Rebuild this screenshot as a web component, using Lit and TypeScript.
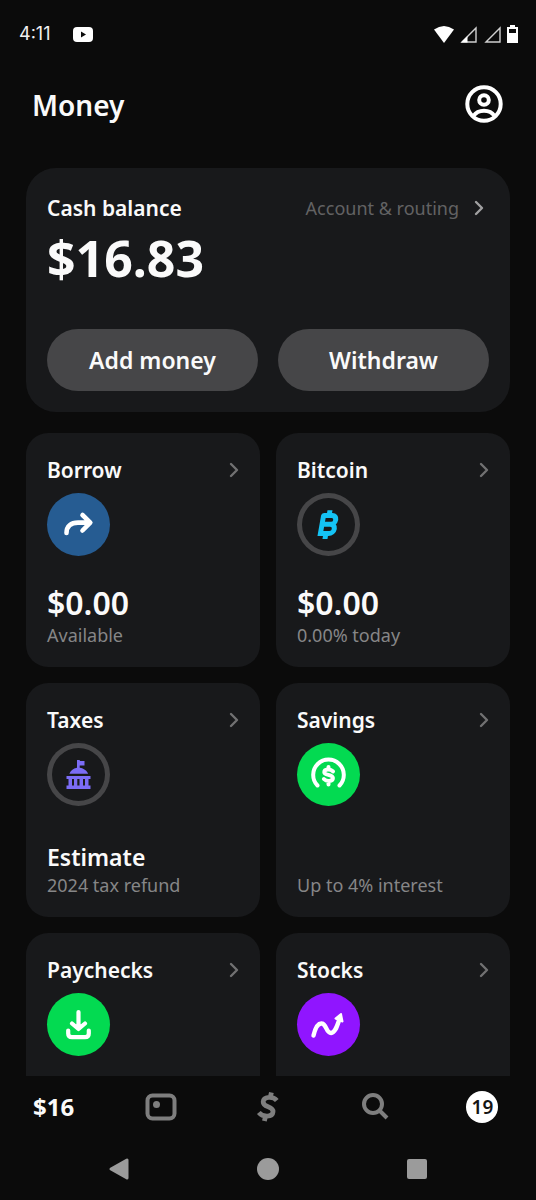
import { LitElement, html, css, svg, nothing } from "lit";
import { customElement } from "lit/decorators.js";
import { classMap } from "lit/directives/class-map.js";

interface Tile {
  title: string;
  tone: string;
  icon: unknown;
  amount?: string;
  headline?: string;
  note?: string;
}

const icons = {
  borrow: svg`<path d="M19.500 40C19.500 33 24 29.600 31 29.600H43M35.500 22L43.300 29.600L35.500 37.500" fill="none" stroke="#fff" stroke-width="4.600" stroke-linecap="round" stroke-linejoin="round"/>`,
  bitcoin: svg`<g transform="translate(30.500 31.500) skewX(-10)" fill="none" stroke="#14c3f5" stroke-width="5" stroke-linejoin="round">
      <path d="M-5.500 9V-9H3A4.400 4.400 0 0 1 3 -.2H-5M3 -.2A4.600 4.600 0 0 1 3 9H-8"/>
      <path d="M0 -14.200V-9M0 9V14.400"/></g>`,
  taxes: svg`<g fill="#7b6cf6"><path d="M30 17h2.400l.8 1h4.300v4.600h-4.800v2.200c4.300.7 7.500 3 8.400 6H22.400c.9-3 3.700-5.300 7.600-6z"/>
      <path fill-rule="evenodd" d="M19.500 33h24v3h-2v6.500h2V46h-24v-3.500h2V36h-2zM25 36v6.500h2V36zM30.300 36v6.500h2.200V36zM36 36v6.500h2V36z"/></g>`,
  savings: svg`<g fill="none" stroke="#fff" stroke-width="4" stroke-linecap="round" stroke-linejoin="round">
      <path d="M20.500 42.500A15.300 15.300 0 1 1 42.500 42.500"/>
      <path d="M36 28.400C33.500 25.600 27.300 25.800 27.300 29.200C27.300 32.800 35.900 31 35.900 35.100C35.900 38.700 29.600 38.900 26.900 36M31.500 24V26M31.500 38.500V41.500"/></g>`,
  paychecks: svg`<path d="M31.500 19V35M25 30.500L31.500 36L38 30.500M21.200 37.500V40.500Q21.200 44.200 25 44.200H38Q41.800 44.200 41.800 40.500V37.500" fill="none" stroke="#fff" stroke-width="4.200" stroke-linecap="round" stroke-linejoin="round"/>`,
  stocks: svg`<path d="M16.500 42.500C18.500 34 21.500 30 25 30.500C29.500 31 29 40 34 40C38.500 39.500 40 33 42.500 26" fill="none" stroke="#fff" stroke-width="4.400" stroke-linecap="round"/><path d="M44 21L45.500 28.500L38.500 25.500Z" fill="#fff" stroke="#fff" stroke-width="2" stroke-linejoin="round"/>`,
};

const tiles: Tile[] = [
  { title: "Borrow", tone: "blue", icon: icons.borrow, amount: "$0.00", note: "Available" },
  { title: "Bitcoin", tone: "ring", icon: icons.bitcoin, amount: "$0.00", note: "0.00% today" },
  { title: "Taxes", tone: "ring", icon: icons.taxes, headline: "Estimate", note: "2024 tax refund" },
  { title: "Savings", tone: "green", icon: icons.savings, note: "Up to 4% interest" },
  { title: "Paychecks", tone: "green", icon: icons.paychecks },
  { title: "Stocks", tone: "violet", icon: icons.stocks },
];

const chevron = html`<svg class="chevron" width="10" height="16" viewBox="0 0 10 16" aria-hidden="true">
  <path d="M2 2L8 8L2 14" fill="none" stroke="currentColor" stroke-width="2.400" stroke-linecap="round" stroke-linejoin="round"/></svg>`;

@customElement("status-bar")
class StatusBar extends LitElement {
  static styles = css`
    :host { display: flex; align-items: center; height: 68px; padding: 0 18px 0 19px; box-sizing: border-box; color: #f0f0f0; }
    .time { font: 400 18px/24px Inter, sans-serif; width: 54px; }
    .signals { display: flex; align-items: center; gap: 6px; margin-left: auto; }
    svg { display: block; }
  `;
  render() {
    return html`<span class="time">4:11</span>
      <svg width="20" height="15" viewBox="0 0 20 15" aria-label="Video"><rect width="20" height="15" rx="4" fill="#fff"/><path d="M8 4.500L13 7.500L8 10.500Z" fill="#0b0b0b"/></svg>
      <div class="signals">
        <svg width="20" height="17" viewBox="0 0 20 17" aria-label="Wi-Fi"><path d="M0 3.500Q10 -3.500 20 3.500L10 17Z" fill="#fff"/></svg>
        <svg width="17" height="17" viewBox="0 0 17 17" aria-label="Signal 1"><path d="M2 16L16 2V16Z" fill="none" stroke="#d0d0d0" stroke-width="1.400"/><path d="M1 16.500L7.500 10V16.500Z" fill="#fff"/></svg>
        <svg width="18" height="17" viewBox="0 0 18 17" aria-label="Signal 2"><path d="M3 16L17 2V16Z" fill="none" stroke="#d0d0d0" stroke-width="1.400"/></svg>
        <svg width="11" height="18" viewBox="0 0 11 18" aria-label="Battery"><path fill-rule="evenodd" d="M3 0h5v2h3v16H0V2h3zM2 4v4h7V4z" fill="#fff"/></svg>
      </div>`;
  }
}

@customElement("money-tile")
class MoneyTile extends LitElement {
  static properties = { tile: { attribute: false } };
  declare tile: Tile;
  static styles = css`
    :host { display: block; }
    .tile { display: flex; flex-direction: column; box-sizing: border-box; min-height: 234px; padding: 21px 21px 20px; border-radius: 22px; background: #18191b; color: #fafafa; text-decoration: none; }
    .top { display: flex; align-items: center; justify-content: space-between; color: #717172; }
    .title { margin: 0; font-size: 21px; line-height: 32px; font-weight: 600; color: #fafafa; }
    .badge { display: block; width: 63px; height: 63px; margin: 7px 0 auto; box-sizing: border-box; border-radius: 50%; }
    .badge svg { display: block; }
    .blue { background: #265c92; }
    .green { background: #03da51; }
    .violet { background: #9015ff; }
    .ring { box-shadow: inset 0 0 0 5px #464648; }
    .amount { font-size: 32px; line-height: 40px; font-weight: 600; }
    .headline { font-size: 23px; line-height: 32px; font-weight: 600; }
    .note { font-size: 18px; line-height: 24px; color: #868687; }
  `;
  render() {
    const t = this.tile;
    return html`<a class="tile" href="#${t.title.toLowerCase()}">
      <div class="top"><h2 class="title">${t.title}</h2>${chevron}</div>
      <span class=${classMap({ badge: true, [t.tone]: true })}><svg width="63" height="63" viewBox="0 0 63 63" aria-hidden="true">${t.icon}</svg></span>
      ${t.amount ? html`<span class="amount">${t.amount}</span>` : nothing}
      ${t.headline ? html`<span class="headline">${t.headline}</span>` : nothing}
      ${t.note ? html`<span class="note">${t.note}</span>` : nothing}
    </a>`;
  }
}

@customElement("app-root")
class AppRoot extends LitElement {
  static styles = css`
    :host { display: flex; flex-direction: column; height: 100vh; background: #0b0b0b; color: #fafafa; font-family: "Noto Sans", sans-serif; }
    .header { display: flex; align-items: center; justify-content: space-between; height: 74px; padding: 0 32px; flex: none; }
    .heading { margin: 0; font-size: 28px; line-height: 40px; font-weight: 600; }
    button { border: 0; padding: 0; margin: 0; background: none; color: inherit; font: inherit; cursor: pointer; }
    svg { display: block; }
    .content { flex: 1; min-height: 0; overflow-y: auto; scrollbar-width: none; padding: 26px 26px 0; }
    .cash { padding: 24px 21px 21px; border-radius: 30px; background: #18191b; }
    .cash-top { display: flex; align-items: center; justify-content: space-between; }
    .cash-title { margin: 0; font-size: 21px; line-height: 32px; font-weight: 600; }
    .routing { display: flex; align-items: center; gap: 15px; margin-right: 5px; font-size: 18px; line-height: 32px; color: #626263; text-decoration: none; }
    .routing .chevron { color: #a0a0a1; }
    .balance { margin: 2px 0 39px; font-size: 50px; line-height: 64px; font-weight: 700; }
    .actions { display: grid; grid-template-columns: 1fr 1fr; gap: 20px; }
    .action { height: 62px; border-radius: 31px; background: #464648; font-size: 23px; line-height: 32px; font-weight: 600; }
    .tiles { display: grid; grid-template-columns: 1fr 1fr; gap: 16px; margin-top: 21px; }
    .tabs { display: grid; grid-template-columns: repeat(5, 1fr); height: 61px; flex: none; color: #7e7e7e; }
    .tab { display: flex; align-items: center; justify-content: center; }
    .tab-balance { font-size: 24px; line-height: 32px; font-weight: 700; color: #fafafa; }
    .count { width: 32px; height: 32px; border-radius: 50%; background: #fff; color: #151515; font-size: 19px; line-height: 32px; font-weight: 600; }
    .system { display: grid; grid-template-columns: repeat(3, 1fr); height: 63px; padding: 0 44px; flex: none; color: #9b9b9b; }
  `;

  render() {
    return html`
      <status-bar></status-bar>
      <header class="header">
        <h1 class="heading">Money</h1>
        <button aria-label="Profile"><svg width="40" height="40" viewBox="0 -1 40 40" fill="none" stroke="#fff" stroke-width="4"><circle cx="20" cy="18" r="16.700"/><circle cx="20" cy="14" r="4.800"/><path d="M9.500 30C14 23 26 23 30.500 30"/></svg></button>
      </header>
      <main class="content">
        <section class="cash">
          <div class="cash-top">
            <h2 class="cash-title">Cash balance</h2>
            <a class="routing" href="#routing">Account &amp; routing ${chevron}</a>
          </div>
          <p class="balance">$16.83</p>
          <div class="actions">
            <button class="action">Add money</button>
            <button class="action">Withdraw</button>
          </div>
        </section>
        <section class="tiles">${tiles.map((t) => html`<money-tile .tile=${t}></money-tile>`)}</section>
      </main>
      <nav class="tabs" aria-label="Main">
        <button class="tab tab-balance">$16</button>
        <button class="tab" aria-label="Card"><svg width="32" height="28" viewBox="0 0 32 28"><rect x="2.500" y="2.500" width="27" height="23" rx="5" fill="none" stroke="currentColor" stroke-width="4"/><circle cx="11.500" cy="11.500" r="3.500" fill="currentColor"/></svg></button>
        <button class="tab" aria-label="Pay"><svg width="24" height="32" viewBox="0 0 24 32" fill="none" stroke="currentColor" stroke-width="4.800"><path d="M20.800 9.500C17 5 7.500 5.500 7.200 10.800C7 17 17.500 14.500 17 20.800C16.500 26.500 7 26.500 2.800 21.500M14.200 6.500L15.400 1.500M8.400 30L9.600 25"/></svg></button>
        <button class="tab" aria-label="Search"><svg width="28" height="28" viewBox="0 0 28 28" fill="none" stroke="currentColor" stroke-width="4"><circle cx="12" cy="11" r="9"/><path d="M18.500 17.500L26 25"/></svg></button>
        <button class="tab" aria-label="Activity, 19 new"><span class="count">19</span></button>
      </nav>
      <nav class="system" aria-label="System">
        <button class="tab" aria-label="Back"><svg width="22" height="24" viewBox="0 0 22 24"><path d="M3 12L19 3V21Z" fill="currentColor" stroke="currentColor" stroke-width="3" stroke-linejoin="round"/></svg></button>
        <button class="tab" aria-label="Home"><svg width="22" height="22" viewBox="0 0 22 22"><circle cx="11" cy="11" r="11" fill="currentColor"/></svg></button>
        <button class="tab" aria-label="Recent apps"><svg width="20" height="20" viewBox="0 0 20 20"><rect width="20" height="20" rx="2" fill="currentColor"/></svg></button>
      </nav>`;
  }
}
